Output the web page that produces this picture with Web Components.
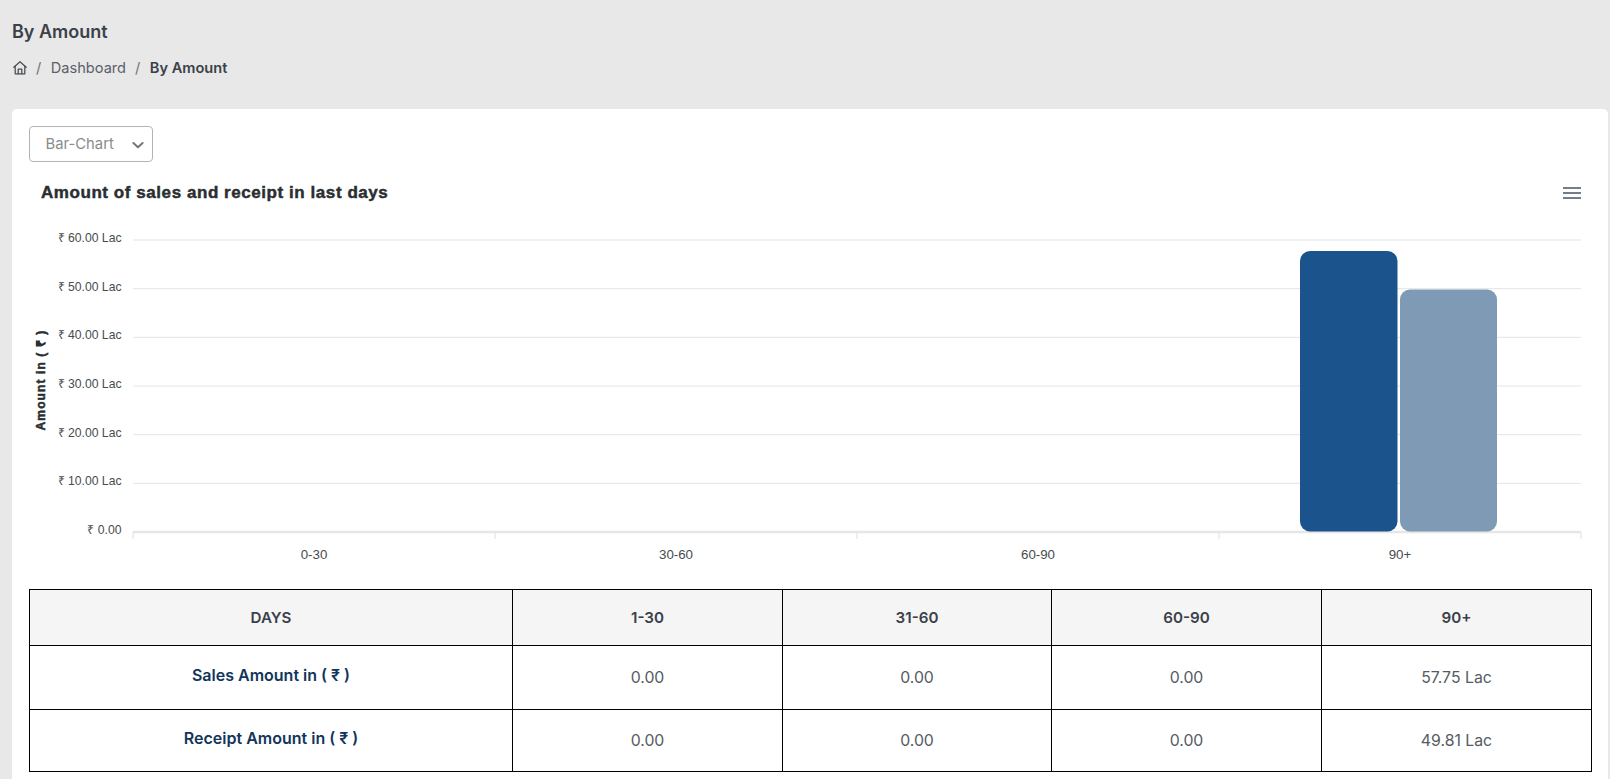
<!DOCTYPE html>
<html lang="en">
<head>
<meta charset="utf-8">
<title>By Amount</title>
<style>
  html, body { margin: 0; height: 100%; overflow: hidden; }
  body { background: #e8e8e8; font-family: Inter, "Liberation Sans", sans-serif; color: #3a4149; }
</style>
</head>
<body>
  <page-header title-text="By Amount">
    <a-crumb>Dashboard</a-crumb>
    <a-crumb current>By Amount</a-crumb>
  </page-header>
  <content-card>
    <chart-type-select value="Bar-Chart"></chart-type-select>
    <amount-chart></amount-chart>
    <amount-table></amount-table>
  </content-card>

<script>
class PageHeader extends HTMLElement {
  constructor() {
    super();
    this.attachShadow({ mode: 'open' }).innerHTML = `
      <style>
        :host { display: block; height: 109px; box-sizing: border-box; padding: 20px 12px 0; }
        h1 { margin: 0; font-size: 18px; line-height: 24px; font-weight: 600; color: #3a4149; }
        nav { display: flex; align-items: center; margin-top: 12px; height: 24px; }
        svg { width: 16px; height: 16px; display: block; margin-right: -1px; }
      </style>
      <h1></h1>
      <nav>
        <svg viewBox="0 0 16 16" fill="none" stroke="#4a5057" stroke-width="1.3" stroke-linejoin="round" stroke-linecap="round">
          <path d="M1.8 7.2 8 1.8l6.2 5.4"/>
          <path d="M3.2 6.2v7.6h9.6V6.2"/>
          <path d="M6.2 13.8V9.2h3.6v4.6"/>
        </svg>
        <slot></slot>
      </nav>`;
    this.shadowRoot.querySelector('h1').textContent = this.getAttribute('title-text');
  }
}

class ACrumb extends HTMLElement {
  constructor() {
    super();
    this.attachShadow({ mode: 'open' }).innerHTML = `
      <style>
        :host { display: inline-flex; font-size: 14.6px; line-height: 24px; color: #5a6068; }
        :host([current]) { font-weight: 600; color: #3a4149; }
        i { font-style: normal; font-weight: 400; color: #6d7278; padding: 0 9.5px 0 9px; }
      </style>
      <i>/</i><span><slot></slot></span>`;
  }
}

class ContentCard extends HTMLElement {
  constructor() {
    super();
    this.attachShadow({ mode: 'open' }).innerHTML = `
      <style>
        :host { display: block; margin: 0 2px 0 12px; padding: 17px 16px 17px 17px; background: #fff; border-radius: 5px; height: 720px; box-sizing: border-box; }
      </style>
      <slot></slot>`;
  }
}

class ChartTypeSelect extends HTMLElement {
  constructor() {
    super();
    this.attachShadow({ mode: 'open' }).innerHTML = `
      <style>
        :host { display: flex; align-items: center; justify-content: space-between; box-sizing: border-box; width: 124px; height: 36px; padding: 0 7px 0 15.5px; border: 1px solid #b4b4b4; border-radius: 4px; font-size: 14.8px; color: #8b8b8b; }
        svg { width: 14px; height: 14px; display: block; margin-top: 1px; }
      </style>
      <span></span>
      <svg viewBox="0 0 14 14" fill="none" stroke="#747474" stroke-width="2" stroke-linecap="round" stroke-linejoin="round"><path d="M2.4 5 7 9.2l4.6-4.2"/></svg>`;
    this.shadowRoot.querySelector('span').textContent = this.getAttribute('value');
  }
}

class AmountChart extends HTMLElement {
  constructor() {
    super();
    // chart area in svg pixels, the same scale as apexcharts drew it
    const left = 104, right = 1552, top = 74, bottom = 366;
    const max = 60;
    const y = v => bottom - (bottom - top) * v / max;
    let grid = '', labels = '', ticks = '';
    for (let v = 0; v <= 60; v += 10) {
      if (v > 0) grid += `<line x1="${left}" x2="${right}" y1="${y(v)}" y2="${y(v)}" stroke="#e2e4e6" stroke-width="1"/>`;
      const txt = v === 0 ? '₹ 0.00' : `₹ ${v}.00 Lac`;
      labels += `<text class="ylab" x="92.5" y="${y(v) + 2}" text-anchor="end">${txt}</text>`;
    }
    const names = ['0-30', '30-60', '60-90', '90+'];
    const step = (right - left) / 4;
    for (let i = 0; i <= 4; i++) {
      ticks += `<line x1="${left + step * i}" x2="${left + step * i}" y1="${bottom}" y2="${bottom + 7}" stroke="#e0e0e0"/>`;
      if (i < 4) labels += `<text class="xlab" x="${left + step * i + step / 2}" y="${bottom + 27}" text-anchor="middle">${names[i]}</text>`;
    }
    this.attachShadow({ mode: 'open' }).innerHTML = `
      <style>
        :host { display: block; height: 423px; margin-top: 4px; }
        svg { display: block; width: 1563px; height: 420px; font-family: "Liberation Sans", Arial, sans-serif; }
        .ylab { font-size: 12.2px; fill: #484c4e; }
        .xlab { font-size: 13.3px; fill: #484c4e; }
        .title { font-size: 17px; font-weight: 700; letter-spacing: .56px; fill: #2a2e30; stroke: #2a2e30; stroke-width: .45px; }
        .axis { font-size: 12px; font-weight: 700; letter-spacing: 1.1px; fill: #2a2e30; stroke: #2a2e30; stroke-width: .5px; }
      </style>
      <svg viewBox="0 0 1563 420">
        <text class="title" x="12" y="32">Amount of sales and receipt in last days</text>
        <g fill="#727f8a">
          <rect x="1534" y="21" width="18" height="2"/>
          <rect x="1534" y="26" width="18" height="2"/>
          <rect x="1534" y="31" width="18" height="2"/>
        </g>
        ${grid}
        <line x1="${left}" x2="${right}" y1="${bottom}" y2="${bottom}" stroke="#e6e6e6" stroke-width="2.5"/>
        ${ticks}
        <rect x="1271" y="${y(57.75)}" width="97.5" height="${bottom - 0.5 - y(57.75)}" rx="10" fill="#1b548c"/>
        <rect x="1371" y="${y(49.81)}" width="97" height="${bottom - 0.5 - y(49.81)}" rx="10" fill="#7f9ab5"/>
        ${labels}
        <text class="axis" transform="translate(16 214) rotate(-90)" text-anchor="middle">Amount in ( ₹ )</text>
      </svg>`;
  }
}

class AmountTable extends HTMLElement {
  constructor() {
    super();
    const rows = [
      ['Sales Amount in ( ₹ )', '0.00', '0.00', '0.00', '57.75 Lac'],
      ['Receipt Amount in ( ₹ )', '0.00', '0.00', '0.00', '49.81 Lac']
    ];
    const head = ['DAYS', '1-30', '31-60', '60-90', '90+'];
    this.attachShadow({ mode: 'open' }).innerHTML = `
      <style>
        :host { display: block; width: 1563px; }
        table { width: 100%; border-collapse: collapse; table-layout: fixed; font-size: 15.8px; }
        th, td { border: 1px solid #000; text-align: center; padding: 0; }
        thead th { height: 55px; background: #f5f5f5; font-size: 15.2px; font-weight: 600; color: #3a4149; }
        tbody td { height: 61px; color: #555b62; }
        tbody th { height: 61px; font-size: 16px; font-weight: 600; color: #12355b; padding-bottom: 5px; box-sizing: border-box; }
        tbody tr:first-child td, tbody tr:first-child th { height: 63px; }
      </style>
      <table>
        <colgroup><col style="width:483px"><col style="width:270px"><col style="width:269px"><col style="width:270px"><col style="width:270px"></colgroup>
        <thead><tr>${head.map(h => `<th>${h}</th>`).join('')}</tr></thead>
        <tbody>${rows.map(r => `<tr><th>${r[0]}</th>${r.slice(1).map(c => `<td>${c}</td>`).join('')}</tr>`).join('')}</tbody>
      </table>`;
  }
}

customElements.define('page-header', PageHeader);
customElements.define('a-crumb', ACrumb);
customElements.define('content-card', ContentCard);
customElements.define('chart-type-select', ChartTypeSelect);
customElements.define('amount-chart', AmountChart);
customElements.define('amount-table', AmountTable);
</script>
</body>
</html>
